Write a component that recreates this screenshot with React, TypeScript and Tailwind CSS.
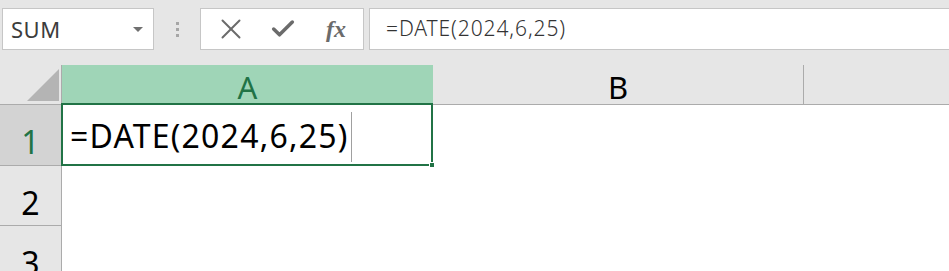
import { X, Check } from "lucide-react";

const font = { fontFamily: '"Noto Sans", "Liberation Sans", sans-serif' };

function RowHeader({ n, active }: { n: number; active?: boolean }) {
  return (
    <div
      className={
        "flex items-center justify-center border-r border-b border-[#ababab] text-[32px] leading-none " +
        (active ? "bg-[#d3d3d3] text-[#217346]" : "bg-[#e6e6e6] text-black")
      }
    >
      <span className="pt-[14px]">{n}</span>
    </div>
  );
}

export default function App() {
  return (
    <div className="w-[949px] h-[271px] overflow-hidden bg-white" style={font}>
      {/* Formula bar */}
      <div className="h-[65px] bg-[#e6e6e6] flex items-start pt-2 pl-[2px]">
        <div className="w-[152px] h-[42px] bg-white border border-[#c6c6c6] flex items-center pl-[8px] pr-[10px]">
          <span className="text-[22px] text-[#3c3c3c] flex-1 tracking-[0.5px]">SUM</span>
          <span className="w-0 h-0 border-l-[5px] border-r-[5px] border-t-[5px] border-l-transparent border-r-transparent border-t-[#707070]" />
        </div>
        <div className="w-[46px] h-[42px] flex flex-col items-center justify-center gap-[3px]">
          <span className="w-[3px] h-[3px] bg-[#a6a6a6]" />
          <span className="w-[3px] h-[3px] bg-[#a6a6a6]" />
          <span className="w-[3px] h-[3px] bg-[#a6a6a6]" />
        </div>
        <div className="w-[164px] h-[42px] bg-white border border-[#c6c6c6] flex items-center">
          <div className="w-[56px] flex justify-center pl-[3px]">
            <X className="w-[34px] h-[34px] text-[#6b6b6b]" strokeWidth={1.4} />
          </div>
          <div className="w-[52px] flex justify-center">
            <Check className="w-[28px] h-[28px] text-[#6b6b6b]" strokeWidth={3} />
          </div>
          <div className="w-[54px] flex justify-center">
            <span
              className="italic text-[24px] text-[#6b6b6b] font-bold"
              style={{ fontFamily: '"Liberation Serif", "DejaVu Serif", serif' }}
            >
              fx
            </span>
          </div>
        </div>
        <div className="ml-[5px] flex-1 h-[42px] bg-white border-y border-l border-[#c6c6c6] flex items-center pl-[16px]">
          <span className="text-[21px] text-[#333] font-light tracking-[0.9px]">=DATE(2024,6,25)</span>
        </div>
      </div>

      {/* Grid */}
      <div className="grid grid-cols-[62px_371px_371px_1fr] grid-rows-[40px_61px_60px_60px]">
        {/* corner */}
        <div className="bg-[#e6e6e6] border-r border-b border-[#ababab] flex items-end justify-end pr-[2px] pb-[3px]">
          <svg width="32" height="32" viewBox="0 0 32 32">
            <polygon points="32,0 32,32 0,32" fill="#b4b4b4" />
          </svg>
        </div>
        <div className="bg-[#9fd5b7] border-b-2 border-[#217346] flex items-center justify-center text-[31px] text-[#217346] leading-none">
          <span className="pt-[6px]">A</span>
        </div>
        <div className="bg-[#e6e6e6] border-r border-b border-[#ababab] flex items-center justify-center text-[31px] text-black leading-none">
          <span className="pt-[6px]">B</span>
        </div>
        <div className="bg-[#e6e6e6] border-b border-[#ababab]" />

        {/* row 1 */}
        <RowHeader n={1} active />
        <div className="relative -ml-px -mt-[2px] border-2 border-[#217346] flex items-center pl-[7px]">
          <span className="text-[32px] text-black leading-none pt-[2px] tracking-[1.2px]">=DATE(2024,6,25)</span>
          <span className="ml-[2px] w-px h-[50px] bg-[#a0a0a0] mt-[4px]" />
          <span className="absolute -right-[4px] -bottom-[4px] w-[6px] h-[6px] bg-[#217346] border border-white" />
        </div>
        <div />
        <div />

        {/* row 2 */}
        <RowHeader n={2} />
        <div />
        <div />
        <div />

        {/* row 3 */}
        <RowHeader n={3} />
        <div />
        <div />
        <div />
      </div>
    </div>
  );
}
